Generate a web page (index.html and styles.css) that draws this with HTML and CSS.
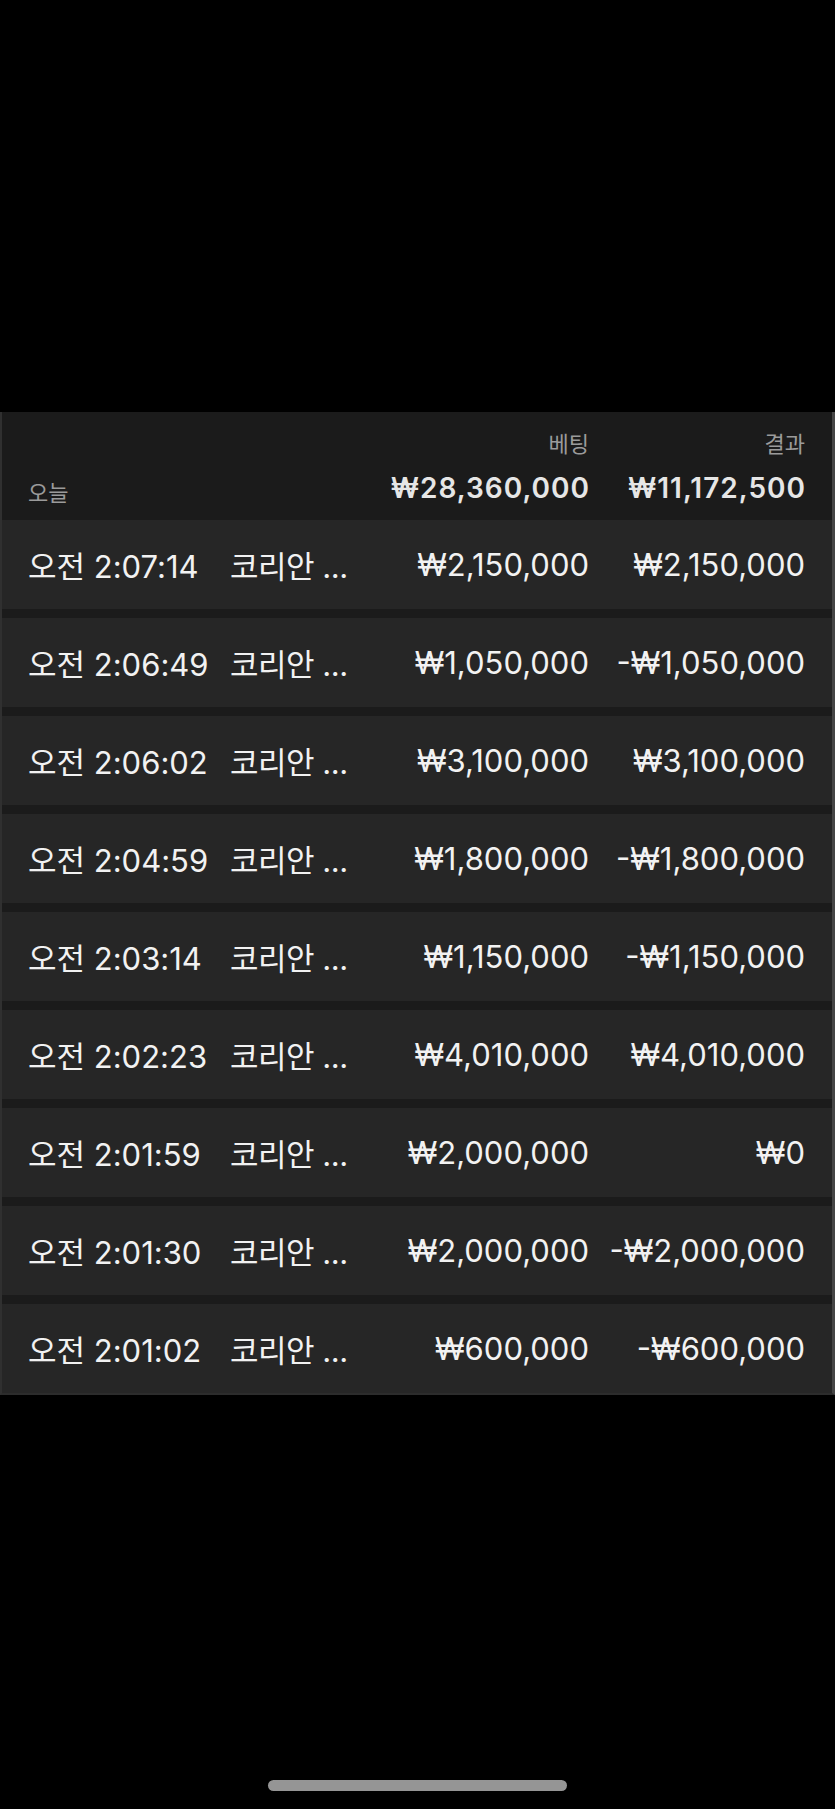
FILE: index.html
```html
<!DOCTYPE html>
<html lang="ko">
<head>
    <meta charset="UTF-8">
    <meta name="viewport" content="width=device-width, initial-scale=1.0">
    <title>베팅 내역</title>
    <link rel="stylesheet" href="styles.css">
</head>
<body>

    <div class="screen">
        <div class="top-space"></div>

        <div class="panel">
            <div class="head">
                <div class="day">오늘</div>
                <div></div>
                <div class="sum">
                    <span class="label">베팅</span>
                    <span class="total">₩28,360,000</span>
                </div>
                <div class="sum">
                    <span class="label">결과</span>
                    <span class="total">₩11,172,500</span>
                </div>
            </div>

            <div class="row">
                <div class="time">오전 2:07:14</div>
                <div class="game">코리안 ...</div>
                <div class="money">₩2,150,000</div>
                <div class="money">₩2,150,000</div>
            </div>
            <div class="row">
                <div class="time">오전 2:06:49</div>
                <div class="game">코리안 ...</div>
                <div class="money">₩1,050,000</div>
                <div class="money">-₩1,050,000</div>
            </div>
            <div class="row">
                <div class="time">오전 2:06:02</div>
                <div class="game">코리안 ...</div>
                <div class="money">₩3,100,000</div>
                <div class="money">₩3,100,000</div>
            </div>
            <div class="row">
                <div class="time">오전 2:04:59</div>
                <div class="game">코리안 ...</div>
                <div class="money">₩1,800,000</div>
                <div class="money">-₩1,800,000</div>
            </div>
            <div class="row">
                <div class="time">오전 2:03:14</div>
                <div class="game">코리안 ...</div>
                <div class="money">₩1,150,000</div>
                <div class="money">-₩1,150,000</div>
            </div>
            <div class="row">
                <div class="time">오전 2:02:23</div>
                <div class="game">코리안 ...</div>
                <div class="money">₩4,010,000</div>
                <div class="money">₩4,010,000</div>
            </div>
            <div class="row">
                <div class="time">오전 2:01:59</div>
                <div class="game">코리안 ...</div>
                <div class="money">₩2,000,000</div>
                <div class="money">₩0</div>
            </div>
            <div class="row">
                <div class="time">오전 2:01:30</div>
                <div class="game">코리안 ...</div>
                <div class="money">₩2,000,000</div>
                <div class="money">-₩2,000,000</div>
            </div>
            <div class="row">
                <div class="time">오전 2:01:02</div>
                <div class="game">코리안 ...</div>
                <div class="money">₩600,000</div>
                <div class="money">-₩600,000</div>
            </div>
        </div>

        <div class="home-bar"></div>
    </div>

</body>
</html>
```

FILE: styles.css
```css
body {
    margin: 0;
    background-color: #000;
    font-family: Inter, "Noto Sans CJK KR", sans-serif;
    color: #f2f2f2;
}
.screen {
    width: 835px;
    height: 1809px;
    display: flex;
    flex-direction: column;
}
.top-space {
    height: 412px;
}
.panel {
    background-color: #1b1b1b;
    border-left: 2px solid #303030;
    border-right: 3px solid #454545;
    border-bottom: 2px solid #2c2c2c;
    display: flex;
    flex-direction: column;
    gap: 9px;
}
.head,
.row {
    display: grid;
    grid-template-columns: 202px 150px 1fr 216px;
    padding: 0 27px 0 26px;
}
.head {
    height: 99px;
    align-items: end;
    padding-bottom: 8px;
    box-sizing: border-box;
}
.day {
    font-size: 22px;
    color: #9b9b9b;
    line-height: 24px;
    margin-bottom: -2px;
}
.sum {
    display: flex;
    flex-direction: column;
    align-items: flex-end;
}
.label {
    font-size: 22px;
    color: #9b9b9b;
    line-height: 24px;
    margin-bottom: 17px;
}
.total {
    font-size: 28px;
    font-weight: 600;
    letter-spacing: 1px;
    margin-right: -1px;
    color: #e6e6e6;
    line-height: 30px;
}
.row {
    height: 89px;
    align-items: center;
    background-color: #262626;
    font-size: 31px;
}
.game {
    letter-spacing: -0.5px;
}
.money {
    text-align: right;
}
.home-bar {
    width: 299px;
    height: 11px;
    border-radius: 6px;
    background-color: #959595;
    margin: auto auto 18px;
}
```
